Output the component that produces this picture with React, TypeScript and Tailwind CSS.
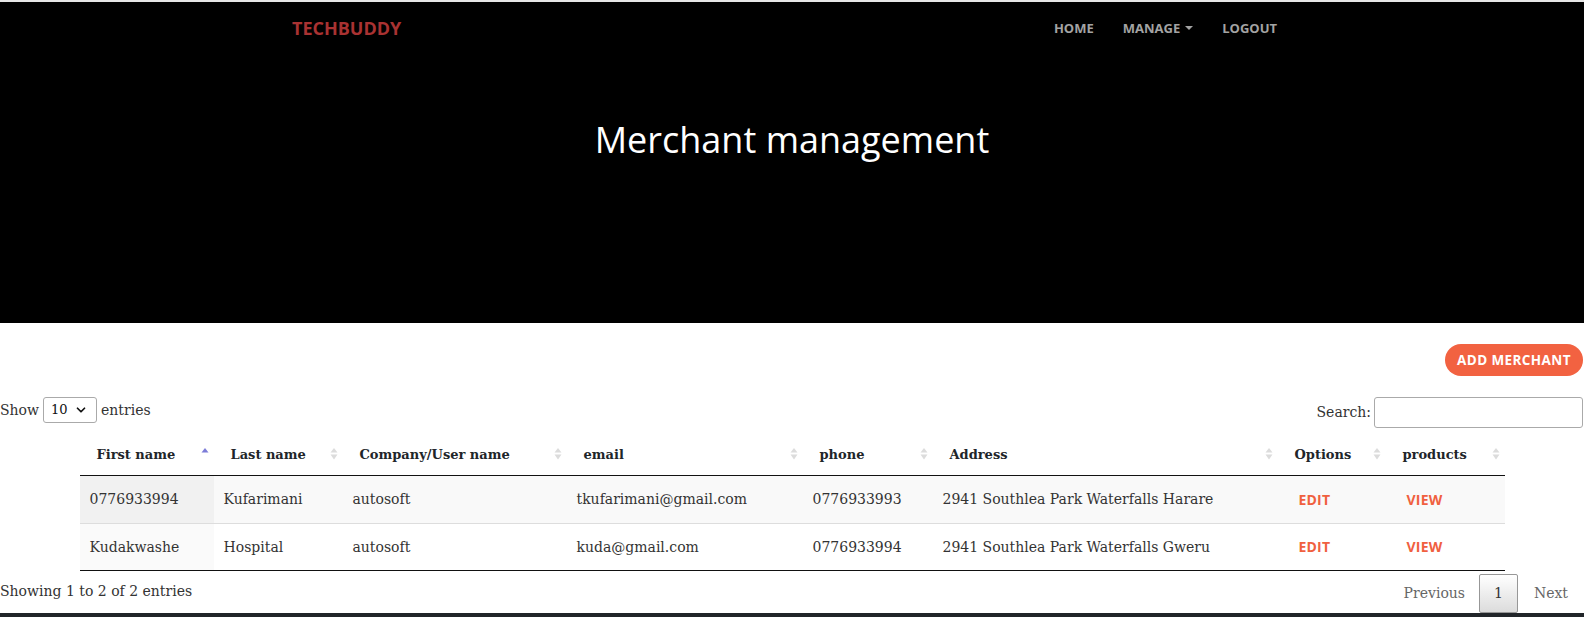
import { ChevronDown } from "lucide-react"

const serif = { fontFamily: '"DejaVu Serif", "Liberation Serif", serif' }

const cols = [
    { label: "First name", w: "w-[134px]", sort: "asc" },
    { label: "Last name", w: "w-[129px]", sort: "both" },
    { label: "Company/User name", w: "w-[224px]", sort: "both" },
    { label: "email", w: "w-[236px]", sort: "both" },
    { label: "phone", w: "w-[130px]", sort: "both" },
    { label: "Address", w: "w-[345px]", sort: "both" },
    { label: "Options", w: "w-[108px]", sort: "both" },
    { label: "products", w: "w-[119px]", sort: "both" },
]

const rows = [
    ["0776933994", "Kufarimani", "autosoft", "tkufarimani@gmail.com", "0776933993", "2941 Southlea Park Waterfalls Harare"],
    ["Kudakwashe", "Hospital", "autosoft", "kuda@gmail.com", "0776933994", "2941 Southlea Park Waterfalls Gweru"],
]

function SortIcon({ sort }: { sort: string }) {
    if (sort === "asc") {
        return (
            <svg width="8" height="13" viewBox="0 0 8 13" className="absolute right-[5px] top-1/2 -translate-y-1/2">
                <polygon points="0.5,5 4,0.5 7.5,5" fill="#7c7cd8" />
            </svg>
        )
    }
    return (
        <svg width="8" height="13" viewBox="0 0 8 13" className="absolute right-[5px] top-1/2 -translate-y-1/2">
            <polygon points="0.5,5 4,0.5 7.5,5" fill="#dcdcdc" />
            <polygon points="0.5,7 4,12 7.5,7" fill="#dcdcdc" />
        </svg>
    )
}

export default function App() {
    return (
        <div className="w-full bg-white text-[#333]">

            <div className="h-[2px] bg-[#e6e6e6]" />

            <header className="bg-black h-[321px]" style={{ fontFamily: '"Open Sans", sans-serif' }}>

                <nav className="h-[52px] flex items-center pl-[292px]">
                    <div className="w-[985px] flex items-center justify-between">
                        <a href="#" className="text-[18px] leading-[24px] font-bold text-[#a93232]">
                            TECHBUDDY
                        </a>

                        <ul className="flex items-center gap-[29px] text-[13px] leading-[20px] font-bold text-[#a3a3a3]">
                            <li><a href="#">HOME</a></li>
                            <li>
                                <a href="#" className="flex items-center">
                                    MANAGE
                                    <span className="ml-[5px] w-0 h-0 border-l-[4px] border-r-[4px] border-t-[4px] border-l-transparent border-r-transparent border-t-[#a3a3a3]" />
                                </a>
                            </li>
                            <li><a href="#">LOGOUT</a></li>
                        </ul>
                    </div>
                </nav>

                <h1 className="mt-[62px] text-center text-white text-[36px] leading-[48px] font-normal">
                    Merchant management
                </h1>

            </header>

            <main style={serif} className="text-[14px]">

                <div className="flex justify-end mt-[21px] pr-[1px]">
                    <button
                        className="h-[32px] w-[138px] rounded-full bg-[#f26241] text-white text-[13.5px] font-bold tracking-[0.4px]"
                        style={{ fontFamily: '"Open Sans", sans-serif' }}
                    >
                        ADD MERCHANT
                    </button>
                </div>

                <div className="flex justify-between items-start mt-[21px] pr-[1px]">
                    <div className="flex items-center h-[26px] gap-[4px]">
                        <span>Show</span>
                        <div className="relative">
                            <select className="appearance-none h-[26px] w-[54px] border border-[#aaa] rounded-[3px] bg-white pl-[7px] text-[13px] text-[#111]">
                                <option>10</option>
                                <option>25</option>
                                <option>50</option>
                                <option>100</option>
                            </select>
                            <ChevronDown size={14} strokeWidth={3} className="absolute right-[9px] top-[6px] text-[#111] pointer-events-none" />
                        </div>
                        <span>entries</span>
                    </div>

                    <label className="flex items-center gap-[3px]">
                        Search:
                        <input className="h-[31px] w-[209px] border border-[#aaa] rounded-[3px] bg-white" />
                    </label>
                </div>

                <table className="mt-[5px] mx-auto w-[1425px] table-fixed border-collapse">
                    <thead>
                        <tr className="border-b border-[#111]">
                            {cols.map((c) => (
                                <th key={c.label} className={`${c.w} relative text-left text-[13px] font-bold text-[#212529] pl-[17px] pr-[18px] pt-[11px] pb-[10px] leading-[21px]`}>
                                    {c.label}
                                    <SortIcon sort={c.sort} />
                                </th>
                            ))}
                        </tr>
                    </thead>
                    <tbody>
                        {rows.map((r, i) => (
                            <tr key={i} className={i === 0 ? "bg-[#f9f9f9] h-[48px]" : "bg-white border-t border-[#ddd] h-[47px]"}>
                                {r.map((cell, j) => (
                                    <td
                                        key={j}
                                        className={`px-[10px] leading-[21px] whitespace-nowrap ${j === 0 ? (i === 0 ? "bg-[#f1f1f1]" : "bg-[#fafafa]") : ""}`}
                                    >
                                        {cell}
                                    </td>
                                ))}
                                <td className="pl-[21px]">
                                    <a href="#" className="text-[14px] font-bold text-[#f0603f] tracking-[0.2px]" style={{ fontFamily: '"Open Sans", sans-serif' }}>EDIT</a>
                                </td>
                                <td className="pl-[21px]">
                                    <a href="#" className="text-[14px] font-bold text-[#f0603f] tracking-[0.2px]" style={{ fontFamily: '"Open Sans", sans-serif' }}>VIEW</a>
                                </td>
                            </tr>
                        ))}
                    </tbody>
                    <tfoot>
                        <tr className="border-t border-[#111]"><td colSpan={8} className="h-0 p-0" /></tr>
                    </tfoot>
                </table>

                <div className="flex justify-between items-start mt-[3px] pr-[2px]">
                    <div className="mt-[7px] leading-[21px]">Showing 1 to 2 of 2 entries</div>
                    <div className="flex items-center">
                        <span className="px-[14px] py-[8px] leading-[21px] text-[#666]">Previous</span>
                        <span className="px-[14px] py-[8px] leading-[21px] border border-[#979797] rounded-[2px] bg-gradient-to-b from-white to-[#dcdcdc] text-[#333]">1</span>
                        <span className="ml-[2px] px-[14px] py-[8px] leading-[21px] text-[#666]">Next</span>
                    </div>
                </div>

            </main>

            <footer className="h-[40px] bg-[#212529]" />

        </div>
    )
}
